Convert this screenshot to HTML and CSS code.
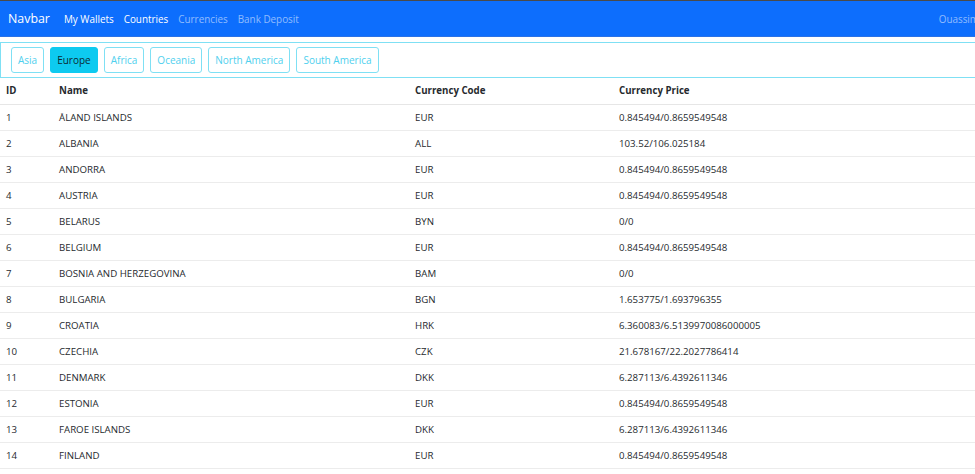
FILE: index.html
```html
<!DOCTYPE html>
<html>
<head>
<meta charset="utf-8">
<link rel="stylesheet" href="styles.css">
</head>
<body>
<nav class="navbar">
  <a class="brand">Navbar</a>
  <a class="nav-link active">My Wallets</a>
  <a class="nav-link active">Countries</a>
  <a class="nav-link">Currencies</a>
  <a class="nav-link">Bank Deposit</a>
  <span class="spacer"></span>
  <a class="nav-link user">Ouassim</a>
</nav>
<div class="regions">
  <button class="btn">Asia</button>
  <button class="btn selected">Europe</button>
  <button class="btn">Africa</button>
  <button class="btn">Oceania</button>
  <button class="btn">North America</button>
  <button class="btn">South America</button>
</div>
<table class="countries">
  <thead>
    <tr><th class="c-id">ID</th><th class="c-name">Name</th><th class="c-code">Currency Code</th><th>Currency Price</th></tr>
  </thead>
  <tbody>
    <tr><td>1</td><td>ÅLAND ISLANDS</td><td>EUR</td><td>0.845494/0.8659549548</td></tr>
    <tr><td>2</td><td>ALBANIA</td><td>ALL</td><td>103.52/106.025184</td></tr>
    <tr><td>3</td><td>ANDORRA</td><td>EUR</td><td>0.845494/0.8659549548</td></tr>
    <tr><td>4</td><td>AUSTRIA</td><td>EUR</td><td>0.845494/0.8659549548</td></tr>
    <tr><td>5</td><td>BELARUS</td><td>BYN</td><td>0/0</td></tr>
    <tr><td>6</td><td>BELGIUM</td><td>EUR</td><td>0.845494/0.8659549548</td></tr>
    <tr><td>7</td><td>BOSNIA AND HERZEGOVINA</td><td>BAM</td><td>0/0</td></tr>
    <tr><td>8</td><td>BULGARIA</td><td>BGN</td><td>1.653775/1.693796355</td></tr>
    <tr><td>9</td><td>CROATIA</td><td>HRK</td><td>6.360083/6.5139970086000005</td></tr>
    <tr><td>10</td><td>CZECHIA</td><td>CZK</td><td>21.678167/22.2027786414</td></tr>
    <tr><td>11</td><td>DENMARK</td><td>DKK</td><td>6.287113/6.4392611346</td></tr>
    <tr><td>12</td><td>ESTONIA</td><td>EUR</td><td>0.845494/0.8659549548</td></tr>
    <tr><td>13</td><td>FAROE ISLANDS</td><td>DKK</td><td>6.287113/6.4392611346</td></tr>
    <tr><td>14</td><td>FINLAND</td><td>EUR</td><td>0.845494/0.8659549548</td></tr>
  </tbody>
</table>
</body>
</html>
```
FILE: styles.css
```css
* { box-sizing: border-box; }
html, body { margin: 0; padding: 0; }
body {
  font-family: "Open Sans", "Noto Sans", sans-serif;
  color: #262a2e;
  background: #fff;
  overflow: hidden;
  border-top: 1px solid #4a4a4a;
}
.navbar {
  display: flex;
  align-items: center;
  height: 36px;
  background: #0d6efd;
  border-bottom: 1px solid #2a72e6;
  padding: 0 0 0 8px;
  white-space: nowrap;
}
.brand {
  color: #fff;
  font-size: 12.4px;
  margin-right: 14px;
}
.nav-link {
  color: rgba(255,255,255,0.55);
  font-size: 9.9px;
  margin-right: 10px;
}
.nav-link.active { color: #fff; }
.spacer { flex: 1; }
.nav-link.user { margin-right: -4px; }
.regions {
  margin-top: 5px;
  height: 36px;
  border: 1px solid #7fe0f4;
  border-right: none;
  display: flex;
  align-items: center;
  gap: 6px;
  padding: 0 0 0 10px;
}
.btn {
  font-family: inherit;
  font-size: 10px;
  height: 26px;
  padding: 0 6px;
  background: #fff;
  color: #4fd0ee;
  border: 1px solid #7fe0f4;
  border-radius: 3px;
}
.btn.selected {
  background: #0dcaf0;
  border-color: #0dcaf0;
  color: #0b2a33;
}
.countries {
  width: 100%;
  border-collapse: collapse;
  font-size: 9.7px;
}
.countries th {
  text-align: left;
  font-weight: 700;
  height: 26px;
  padding: 0 6px;
  border-bottom: 1px solid #e6e6e6;
}
.countries td {
  height: 26px;
  padding: 0 6px;
  border-bottom: 1px solid #ececec;
}
.c-id { width: 53px; }
.c-name { width: 356px; }
.c-code { width: 204px; }
```
